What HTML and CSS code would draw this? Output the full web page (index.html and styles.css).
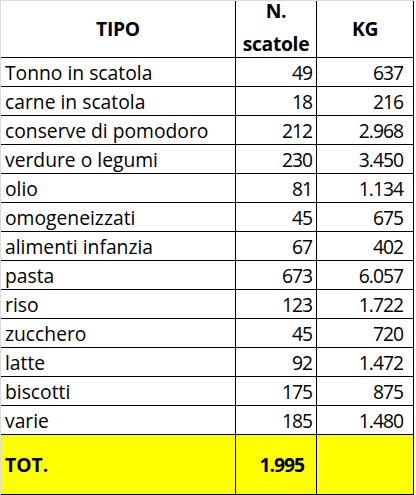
FILE: index.html
```html
<!DOCTYPE html>
<html lang="it">
<head>
<meta charset="utf-8">
<title>Tabella</title>
<link rel="stylesheet" href="styles.css">
</head>
<body>
<div class="sheet">
  <div class="grid">
    <div class="cell head">TIPO</div>
    <div class="cell head two"><span class="l1">N.</span><span class="l2">scatole</span></div>
    <div class="cell head">KG</div>

    <div class="cell txt">Tonno in scatola</div><div class="cell n2">49</div><div class="cell n3">637</div>
    <div class="cell txt">carne in scatola</div><div class="cell n2">18</div><div class="cell n3">216</div>
    <div class="cell txt">conserve di pomodoro</div><div class="cell n2">212</div><div class="cell n3">2.968</div>
    <div class="cell txt">verdure o legumi</div><div class="cell n2">230</div><div class="cell n3">3.450</div>
    <div class="cell txt">olio</div><div class="cell n2">81</div><div class="cell n3">1.134</div>
    <div class="cell txt">omogeneizzati</div><div class="cell n2">45</div><div class="cell n3">675</div>
    <div class="cell txt">alimenti infanzia</div><div class="cell n2">67</div><div class="cell n3">402</div>
    <div class="cell txt">pasta</div><div class="cell n2">673</div><div class="cell n3">6.057</div>
    <div class="cell txt">riso</div><div class="cell n2">123</div><div class="cell n3">1.722</div>
    <div class="cell txt">zucchero</div><div class="cell n2">45</div><div class="cell n3">720</div>
    <div class="cell txt">latte</div><div class="cell n2">92</div><div class="cell n3">1.472</div>
    <div class="cell txt">biscotti</div><div class="cell n2">175</div><div class="cell n3">875</div>
    <div class="cell txt">varie</div><div class="cell n2">185</div><div class="cell n3">1.480</div>

    <div class="cell tot txt">TOT.</div>
    <div class="cell tot n2 totnum">1.995</div>
    <div class="cell tot n3"></div>
  </div>
</div>
</body>
</html>
```
FILE: styles.css
```css
html, body {
  margin: 0;
  padding: 0;
  background: #ffffff;
}
body {
  width: 416px;
  height: 495px;
  overflow: hidden;
  font-family: "Open Sans", "Liberation Sans", sans-serif;
  font-size: 19.3px;
  color: #000;
}
.sheet {
  border-top: 1px solid #dcdcdc;
  border-left: 1px solid #dcdcdc;
  width: 413px;
}
.grid {
  display: grid;
  grid-template-columns: 235px 81px 97px;
  grid-template-rows: 57px repeat(13, 29px) 60px;
}
.cell {
  box-sizing: border-box;
  border-right: 1px solid #000;
  border-bottom: 1px solid #000;
  white-space: nowrap;
}
.head {
  font-weight: bold;
  text-align: center;
  line-height: 19px;
  padding-top: 18px;
  letter-spacing: -0.3px;
}
.head.two {
  padding-top: 0;
  display: flex;
  flex-direction: column;
  align-items: center;
}
.l1, .l2 {
  display: block;
  line-height: 19px;
}
.l2 { margin-top: 14px; }
.txt, .n2, .n3 {
  padding-top: 1px;
  line-height: 27px;
}
.txt { padding-left: 4px; }
.n2, .n3 {
  text-align: right;
  letter-spacing: -1px;
}
.n2 { padding-right: 4px; }
.n3 { padding-right: 10px; }
.tot {
  background: #ffff00;
  font-weight: bold;
  line-height: 58px;
  padding-top: 1px;
}
.totnum { padding-right: 12px; }
```
